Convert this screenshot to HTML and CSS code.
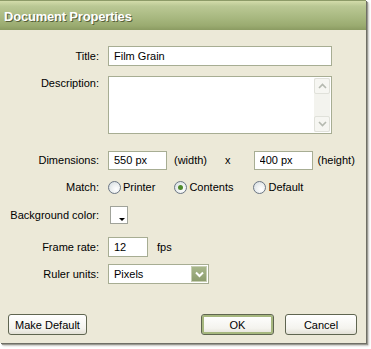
FILE: index.html
```html
<html>
<head>
    <meta charset="UTF-8">
    <title>Document Properties</title>
    <link rel="stylesheet" href="styles.css">
</head>

<body>
    <div class="window">
        <div class="titlebar">Document Properties</div>

        <div class="content">
            <div class="row row-title">
                <label class="lbl">Title:</label>
                <div class="field"><input class="text wide" type="text" value="Film Grain"></div>
            </div>

            <div class="row row-desc">
                <label class="lbl top">Description:</label>
                <div class="field">
                    <div class="memo">
                        <div class="scroll">
                            <div class="sbtn">
                                <svg width="9" height="6" viewBox="0 0 9 6"><path d="M1 5 L4.5 1.5 L8 5" fill="none" stroke="#b5b9b0" stroke-width="1.6"/></svg>
                            </div>
                            <div class="strack"></div>
                            <div class="sbtn">
                                <svg width="9" height="6" viewBox="0 0 9 6"><path d="M1 1 L4.5 4.5 L8 1" fill="none" stroke="#b5b9b0" stroke-width="1.6"/></svg>
                            </div>
                        </div>
                    </div>
                </div>
            </div>

            <div class="row row-dims">
                <label class="lbl">Dimensions:</label>
                <div class="field">
                    <input class="text dim" type="text" value="550 px">
                    <span class="unit">(width)</span>
                    <span class="times">x</span>
                    <input class="text dim" type="text" value="400 px">
                    <span class="unit2">(height)</span>
                </div>
            </div>

            <div class="row row-match">
                <label class="lbl">Match:</label>
                <div class="field">
                    <span class="radio"></span><span class="opt opt-printer">Printer</span>
                    <span class="radio on"></span><span class="opt opt-contents">Contents</span>
                    <span class="radio"></span><span class="opt">Default</span>
                </div>
            </div>

            <div class="row row-bg">
                <label class="lbl">Background color:</label>
                <div class="field"><span class="swatch"></span></div>
            </div>

            <div class="row row-fps">
                <label class="lbl">Frame rate:</label>
                <div class="field">
                    <input class="text fps" type="text" value="12">
                    <span class="unit fpsunit">fps</span>
                </div>
            </div>

            <div class="row row-ruler">
                <label class="lbl">Ruler units:</label>
                <div class="field">
                    <div class="select">
                        <span class="sel-text">Pixels</span>
                        <span class="sel-btn">
                            <svg width="9" height="7" viewBox="0 0 9 7"><path d="M1 1.5 L4.5 5 L8 1.5" fill="none" stroke="#ffffff" stroke-width="2"/></svg>
                        </span>
                    </div>
                </div>
            </div>

            <div class="footer">
                <button class="btn make">Make Default</button>
                <div class="spacer"></div>
                <button class="btn ok">OK</button>
                <button class="btn cancel">Cancel</button>
            </div>
        </div>
    </div>
</body>
</html>
```

FILE: styles.css
```css
body {
    margin: 0;
    background: #ffffff;
    font-family: "Liberation Sans", Arial, sans-serif;
    font-size: 11px;
    color: #000000;
}

.window {
    width: 366px;
    height: 343px;
    background: #ECE9D8;
    box-shadow: 1px 1px 0 #6f6f66, 2px 2px 1px #9a9a92, 3px 3px 2px #d0d0cc;
}

.titlebar {
    height: 30px;
    line-height: 31px;
    padding-left: 4px;
    font-size: 13px;
    font-weight: bold;
    letter-spacing: -0.2px;
    color: #ffffff;
    text-shadow: 1px 1px 0 #55603a;
    background: linear-gradient(#d3dcaa 0%, #bac894 18%, #a9b981 55%, #9aab70 85%, #8b9b62 100%);
    border-top: 1px solid #8d9b68;
    box-sizing: border-box;
}

.content {
    padding-top: 16px;
}

.row {
    display: flex;
    align-items: center;
}

.lbl {
    width: 99px;
    text-align: right;
    flex-shrink: 0;
}

.lbl.top {
    align-self: flex-start;
    padding-top: 1px;
}

.field {
    margin-left: 9px;
    display: flex;
    align-items: center;
}

.row-title { height: 20px; }
.row-desc { margin-top: 10px; height: 58px; }
.row-dims { margin-top: 16px; height: 20px; }
.row-match { margin-top: 8px; height: 18px; }
.row-bg { margin-top: 10px; height: 18px; }
.row-fps { margin-top: 13px; height: 20px; }
.row-ruler { margin-top: 7px; height: 20px; }

.text {
    box-sizing: border-box;
    height: 20px;
    border: 1px solid #a7ad93;
    background: #ffffff;
    font-family: "Liberation Sans", Arial, sans-serif;
    font-size: 11px;
    padding: 0 0 0 5px;
    margin: 0;
    outline: none;
}

.wide { width: 224px; }
.dim { width: 59px; height: 19px; }
.fps { width: 40px; }

.unit { margin-left: 7px; }
.times { margin-left: 18px; margin-right: 23px; }
.unit2 { margin-left: 5px; }
.fpsunit { margin-left: 9px; }

.memo {
    box-sizing: border-box;
    width: 224px;
    height: 58px;
    border: 1px solid #a7ad93;
    background: #ffffff;
    display: flex;
    justify-content: flex-end;
    padding: 1px 1px 1px 0;
}

.scroll {
    width: 16px;
    display: flex;
    flex-direction: column;
    background: #f3f3ee;
}

.sbtn {
    box-sizing: border-box;
    height: 16px;
    border: 1px solid #e0e1da;
    border-radius: 2px;
    background: #f6f6f2;
    display: flex;
    align-items: center;
    justify-content: center;
}

.strack {
    flex: 1;
}

.radio {
    box-sizing: border-box;
    width: 13px;
    height: 13px;
    border: 1px solid #6b7684;
    border-radius: 50%;
    background: radial-gradient(circle at 65% 65%, #ffffff 0%, #edf0f0 45%, #cfd8de 100%);
    position: relative;
}

.radio.on::after {
    content: "";
    position: absolute;
    left: 3px;
    top: 3px;
    width: 5px;
    height: 5px;
    border-radius: 50%;
    background: #4f8a2c;
}

.opt { margin-left: 2px; }
.opt-printer { margin-right: 19px; }
.opt-contents { margin-right: 20px; }

.swatch {
    box-sizing: border-box;
    width: 18px;
    height: 18px;
    margin-left: 2px;
    border: 1px solid #a0a39a;
    background: #ffffff;
    position: relative;
}

.swatch::after {
    content: "";
    position: absolute;
    right: 2px;
    bottom: 2px;
    border-left: 3px solid transparent;
    border-right: 3px solid transparent;
    border-top: 3px solid #000000;
}

.select {
    box-sizing: border-box;
    width: 101px;
    height: 20px;
    border: 1px solid #a7ad93;
    background: #ffffff;
    display: flex;
    align-items: center;
    padding: 1px;
}

.sel-text {
    flex: 1;
    padding-left: 4px;
}

.sel-btn {
    width: 16px;
    height: 16px;
    background: linear-gradient(#a7b68a, #8d9d6e);
    border: 1px solid #c7ceb3;
    box-sizing: border-box;
    display: flex;
    align-items: center;
    justify-content: center;
}

.footer {
    display: flex;
    margin-top: 30px;
    padding: 0 9px 0 8px;
}

.spacer { flex: 1; }

.btn {
    box-sizing: border-box;
    height: 21px;
    border: 1px solid #5f6550;
    border-radius: 3px;
    background: linear-gradient(#ffffff, #f4f3ee 70%, #e3e1d6);
    font-family: "Liberation Sans", Arial, sans-serif;
    font-size: 11px;
    color: #000000;
    padding: 0;
}

.make { width: 79px; }
.ok {
    width: 73px;
    box-shadow: inset 0 0 0 2px #a6b77e;
    margin-right: 11px;
}
.cancel { width: 72px; }
```
